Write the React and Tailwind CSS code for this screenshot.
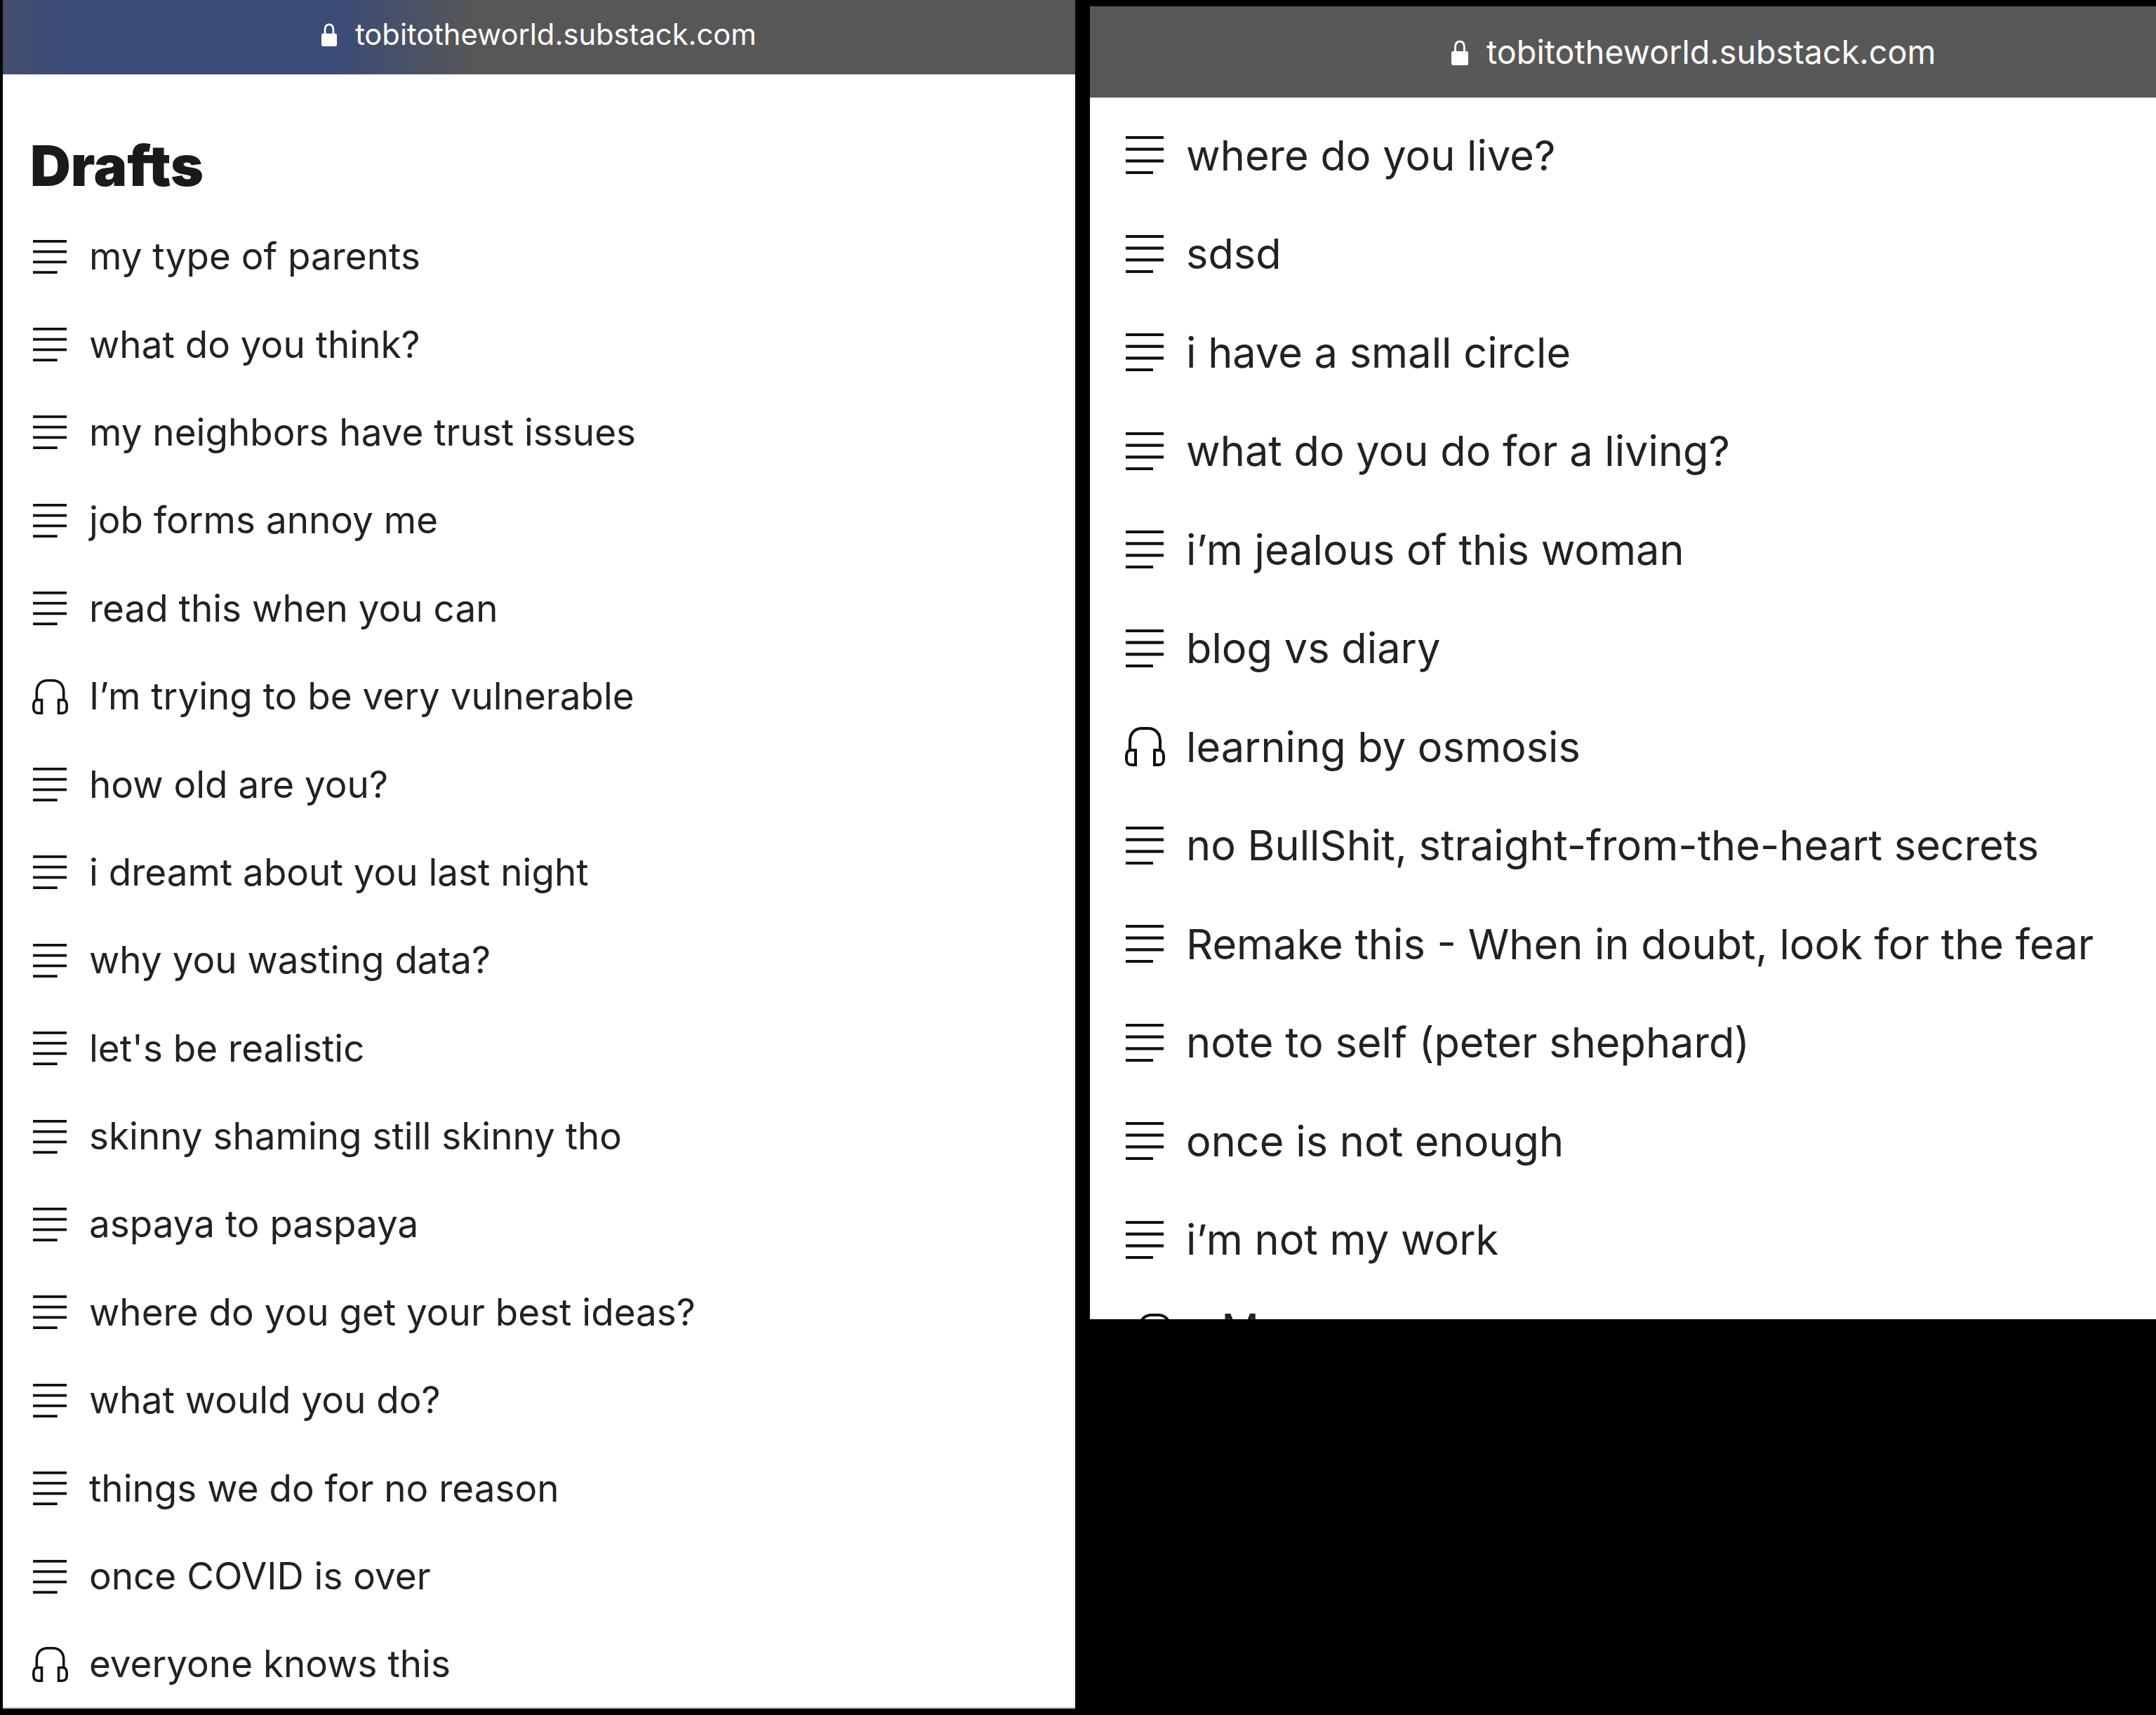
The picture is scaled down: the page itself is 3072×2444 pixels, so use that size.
const leftRows = [
  ['my type of parents'],
  ['what do you think?'],
  ['my neighbors have trust issues'],
  ['job forms annoy me'],
  ['read this when you can'],
  ['I’m trying to be very vulnerable', true],
  ['how old are you?'],
  ['i dreamt about you last night'],
  ['why you wasting data?'],
  ["let's be realistic"],
  ['skinny shaming still skinny tho'],
  ['aspaya to paspaya'],
  ['where do you get your best ideas?'],
  ['what would you do?'],
  ['things we do for no reason'],
  ['once COVID is over'],
  ['everyone knows this', true],
];

const rightRows = [
  ['where do you live?'],
  ['sdsd'],
  ['i have a small circle'],
  ['what do you do for a living?'],
  ['i’m jealous of this woman'],
  ['blog vs diary'],
  ['learning by osmosis', true],
  ['no BullShit, straight-from-the-heart secrets'],
  ['Remake this - When in doubt, look for the fear'],
  ['note to self (peter shephard)'],
  ['once is not enough'],
  ['i’m not my work'],
];

function PostIcon({ className }) {
  return (
    <svg viewBox="0 0 54 54" className={className} stroke="#111" strokeWidth="4.2" fill="none">
      <path d="M0 2H54M0 18.7H54M0 35.3H54M0 52H39" />
    </svg>
  );
}

function AudioIcon({ className }) {
  return (
    <svg viewBox="0 0 57 56" className={className} stroke="#111" strokeWidth="4" fill="none">
      <path d="M7 33V20C7 8 15 2 24 2H33C42 2 50 8 50 20V33" />
      <path d="M15 33H8C4 33 2 37 2 42V46C2 51 5 54 9 54H15Z" />
      <path d="M42 33H49C53 33 55 37 55 42V46C55 51 52 54 48 54H42Z" />
    </svg>
  );
}

function LockIcon({ className }) {
  return (
    <svg viewBox="0 0 24 36" className={className} fill="#fff">
      <path d="M5.500 18V11C5.500 5 8 2 12 2S18.500 5 18.500 11V18" fill="none" stroke="#fff" strokeWidth="3" />
      <rect x="0" y="16" width="24" height="20" rx="2.500" />
    </svg>
  );
}

function SmallRow({ title, audio }) {
  return (
    <div className="flex h-[125.4px] items-center">
      <div className="flex w-[52px] justify-center">
        {audio ? <AudioIcon className="h-[50px] w-[51px]" /> : <PostIcon className="h-[48px] w-[48px]" />}
      </div>
      <span className="ml-[30px] text-[53px] leading-none text-[#222] whitespace-nowrap">{title}</span>
    </div>
  );
}

function BigRow({ title, audio }) {
  return (
    <div className="flex h-[140.5px] shrink-0 items-center">
      <div className="flex w-[58px] justify-center">
        {audio ? <AudioIcon className="h-[56px] w-[57px]" /> : <PostIcon className="h-[54px] w-[54px]" />}
      </div>
      <span className="ml-[30px] text-[59.5px] leading-none text-[#222] whitespace-nowrap">{title}</span>
    </div>
  );
}

export default function App() {
  return (
    <div className="flex h-[2444px] w-[3072px] items-start overflow-hidden bg-black font-['Inter',sans-serif]">
      <div className="ml-[4px] flex h-[2435px] w-[1528px] flex-col border-b-2 border-[#bbb] bg-white">
        <div className="flex h-[106px] shrink-0 items-center justify-center gap-[24px] bg-[linear-gradient(90deg,#454e6e_0%,#3b4b78_6%,#3b4b78_31%,#575757_44%)] pb-[7px]">
          <LockIcon className="h-[33px] w-[22px]" />
          <span className="ml-[2px] text-[41.7px] leading-none text-white">tobitotheworld.substack.com</span>
        </div>
        <div className="pl-[41px]">
          <div className="h-[197px] pt-[90px]">
            <h1 className="-ml-[2px] text-[80px] leading-none font-black text-[#1a1a1a]">Drafts</h1>
          </div>
          {leftRows.map(([title, audio]) => (
            <SmallRow key={title} title={title} audio={audio} />
          ))}
        </div>
      </div>
      <div className="mt-[9px] ml-[21px] flex h-[1871px] w-[1519px] flex-col overflow-hidden bg-white">
        <div className="flex h-[130px] shrink-0 items-center gap-[26px] bg-[#585858] pl-[515px]">
          <LockIcon className="mt-[2px] h-[36px] w-[24px]" />
          <span className="text-[46.700px] leading-none text-white">tobitotheworld.substack.com</span>
        </div>
        <div className="flex flex-col pt-[12px] pl-[49px]">
          {rightRows.map(([title, audio]) => (
            <BigRow key={title} title={title} audio={audio} />
          ))}
          {/* next row is cut off by the screenshot, only its top shows */}
          <div className="-mt-[14px] flex h-[140.5px] shrink-0 items-center">
            <div className="flex w-[58px] justify-center">
              <AudioIcon className="h-[56px] w-[57px] translate-x-[14px] translate-y-[7px]" />
            </div>
            <span className="ml-[30px] text-[59.5px] leading-none text-[#222] whitespace-nowrap">a M</span>
          </div>
        </div>
      </div>
    </div>
  );
}
